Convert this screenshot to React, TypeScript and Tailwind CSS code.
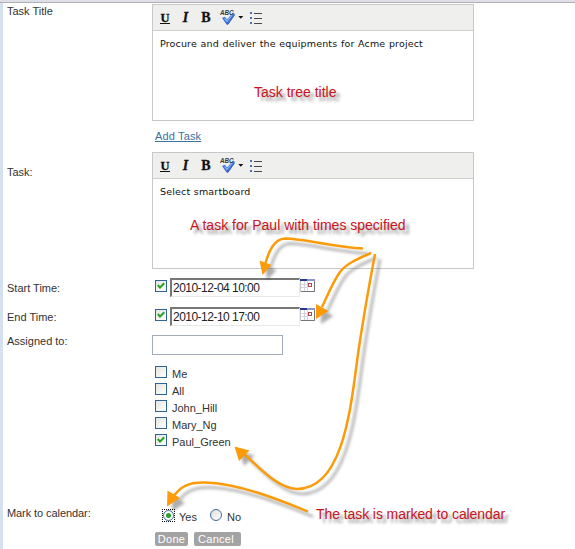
import type { ReactNode } from "react";

function SpellIcon() {
  return (
    <svg className="ml-[9px] h-[17px] w-[24px] shrink-0" viewBox="0 0 24 17">
      <path d="M2 9 L5 7.8 L7 10.5 L13 3.5 L15 5 L8 15.5 L6.5 15.5 Z" fill="#3f74d6" />
      <path d="M4.5 9.3 L7 12.3 L12.5 5.5" fill="none" stroke="#8fb6f5" strokeWidth="1.1" />
      <path d="M7 15.200 L8.200 15 L14.5 6" fill="none" stroke="#2d56a8" strokeWidth="0.9" />
      <text x="0" y="6.4" fontSize="6.5" fontWeight="700" fontStyle="italic" textLength="13.5" lengthAdjust="spacingAndGlyphs" fill="#34383f" fontFamily="Liberation Sans, sans-serif">ABC</text>
      <path d="M18.3 7 h5 l-2.500 2.800 z" fill="#111" />
    </svg>
  );
}

function ListIcon() {
  return (
    <svg className="ml-[6px] h-[12px] w-[12px] shrink-0" viewBox="0 0 12 12">
      <g fill="#4a70b4">
        <rect x="0" y="0" width="2" height="2" />
        <rect x="0" y="5" width="2" height="2" />
        <rect x="0" y="10" width="2" height="2" />
      </g>
      <path d="M4 1.500h8M4 6.500h8M4 11.500h8" stroke="#44474b" strokeWidth="1" />
    </svg>
  );
}

function Editor({ children }: { children: ReactNode }) {
  return (
    <div className="flex h-[117px] w-[322px] flex-col border border-[#c6c8ca] bg-white">
      <div className="flex h-[26px] shrink-0 items-center border-b border-[#cfcfca] bg-[#efefee] pl-[7px] font-['Liberation_Serif',serif] text-[14px] leading-none text-[#111] [-webkit-text-stroke:0.3px_#111]">
        <span className="mt-px w-[10px] border-b border-[#111] text-center text-[12.5px] leading-[10px] font-bold">U</span>
        <span className="ml-[11px] w-[9px] text-center font-bold italic">I</span>
        <span className="ml-[11px] w-[10px] text-center font-bold">B</span>
        <SpellIcon />
        <ListIcon />
      </div>
      <div className="pt-[6px] pl-[7px] font-['DejaVu_Sans',sans-serif] text-[9.5px] leading-[14px] tracking-[0.16px] whitespace-nowrap text-[#111] [word-spacing:0.4px]">
        {children}
      </div>
    </div>
  );
}

function Check({ on = false }: { on?: boolean }) {
  return (
    <span className="flex h-[12px] w-[12px] shrink-0 items-center justify-center border border-[#2f6493] bg-linear-to-br from-[#e4e4e0] to-white">
      {on && (
        <svg className="h-[8px] w-[8px]" viewBox="0 0 8 8">
          <path d="M0.8 3 L3 5.6 L7.2 1.2" fill="none" stroke="#21a121" strokeWidth="2" />
        </svg>
      )}
    </span>
  );
}

function CalendarIcon() {
  return (
    <svg className="h-[13px] w-[15px] shrink-0" viewBox="0 0 15 13">
      <rect x="0.5" y="0.5" width="14" height="12" fill="#fff" stroke="#c5c5ca" />
      <path d="M4.5 2v10M7.5 2v10M1 5.5h7M1 8.5h7" stroke="#d2d3dc" />
      <rect x="0" y="0" width="7" height="2" fill="#27368f" />
      <rect x="7" y="0" width="8" height="2" fill="#8b96c6" />
      <path d="M14.5 2v10.5H1" fill="none" stroke="#77757a" />
      <rect x="8.5" y="4.5" width="3" height="3" fill="#fff" stroke="#b8444c" strokeWidth="1" />
    </svg>
  );
}

function TimeRow({ label, value }: { label: string; value: string }) {
  return (
    <div className="flex h-[19px]">
      <div className="w-[148px] shrink-0 pt-[4px]">{label}</div>
      <div className="mt-[2px]">
        <Check on />
      </div>
      <div className="ml-[3px] flex h-[19px] w-[130px] items-center border-t-2 border-l-2 border-r border-b border-t-[#777] border-r-[#eeeeec] border-b-[#e8e8e6] border-l-[#777] pl-px text-[12px] tracking-[-0.52px] whitespace-nowrap text-[#222]">
        {value}
      </div>
      <div className="mt-px">
        <CalendarIcon />
      </div>
    </div>
  );
}

const people = ["Me", "All", "John_Hill", "Mary_Ng", "Paul_Green"];

const note =
  "absolute text-[14px] leading-[18px] whitespace-nowrap text-[#c9141e] [text-shadow:4px_4px_3px_rgba(0,0,0,0.42)]";

function Arrows() {
  return (
    <svg className="absolute top-0 left-0 h-[549px] w-[575px] [filter:drop-shadow(5px_5px_1.5px_rgba(0,0,0,0.32))]" viewBox="0 0 575 549">
      <g fill="none" stroke="#fb9b0a" strokeWidth="2.5">
        <path d="M363 248.500 C334 247 306 239 285 238.500 C274 239 269 251 265.500 263" />
        <path d="M371 253 C357 259 346 264 340 272 C333 282 328 294 322 307" />
        <path d="M375 254 C368 291 363 320 358 354 C351 405 344 489 297 489 C277 488 259 467 243 453" />
        <path d="M308 511.500 C282 501 240 483.500 205 482.500 C188 482 180 487 173 497" />
      </g>
      <g fill="#fb9b0a">
        <path d="M262.500 275 L259.500 260.500 L271.500 265 Z" />
        <path d="M316 319 L316 304 L328.500 311 Z" />
        <path d="M234.500 446.500 L249.500 450.500 L239 461 Z" />
        <path d="M167 506.500 L167.500 490.500 L180 498 Z" />
      </g>
    </svg>
  );
}

export default function App() {
  return (
    <div className="relative h-[549px] w-[575px] overflow-hidden bg-white font-['Liberation_Sans',Arial,sans-serif] text-[11px] leading-[13px] text-[#333]">
      <div className="h-[3px] border-b border-[#b0b0b0] bg-[#dfdfe9]" />
      <div className="flex h-[546px] flex-col border-l-[3px] border-[#d5e1ef] pl-[4px]">
        <div className="mt-px flex h-[117px]">
          <div className="w-[145px] shrink-0 pt-px">Task Title</div>
          <Editor>Procure and deliver the equipments for Acme project</Editor>
        </div>
        <div className="flex h-[31px] items-center pl-[148px]">
          <a className="tracking-[0.15px] text-[#3a6f9f] underline">Add Task</a>
        </div>
        <div className="flex h-[117px]">
          <div className="w-[145px] shrink-0 pt-[14px]">Task:</div>
          <Editor>Select smartboard</Editor>
        </div>
        <div className="mt-[9px] flex flex-col gap-[10px]">
          <TimeRow label="Start Time:" value="2010-12-04 10:00" />
          <TimeRow label="End Time:" value="2010-12-10 17:00" />
        </div>
        <div className="mt-[9px] flex h-[20px]">
          <div className="w-[145px] shrink-0">Assigned to:</div>
          <div className="h-[20px] w-[131px] border border-[#a3adb9]" />
        </div>
        <div className="mt-[10px] flex flex-col pl-[148px]">
          {people.map((name) => (
            <div key={name} className="flex h-[17px] gap-[5px]">
              <div className="pt-px">
                <Check on={name === "Paul_Green"} />
              </div>
              <span className="pt-[3px]">{name}</span>
            </div>
          ))}
        </div>
        <div className="mt-[57px] flex h-[18px]">
          <div className="w-[155px] shrink-0 tracking-[-0.08px]">Mark to calendar:</div>
          <span className="mt-[2px] flex h-[13px] w-[13px] items-center justify-center border border-dotted border-[#111]">
            <span className="flex h-[11px] w-[11px] shrink-0 items-center justify-center rounded-full border border-[#3e6d96] bg-white">
              <span className="h-[5px] w-[5px] rounded-full bg-[#27a527]" />
            </span>
          </span>
          <span className="ml-[4px] pt-[4px]">Yes</span>
          <span className="mt-[2px] ml-[13px] h-[12px] w-[12px] rounded-full border border-[#3e6d96] bg-linear-to-br from-[#deded9] to-white" />
          <span className="ml-[5px] pt-[4px]">No</span>
        </div>
        <div className="mt-[7px] flex gap-[6px] pl-[148px] text-[11px] leading-[15px] text-white">
          <div className="h-[14px] w-[33px] rounded-[2px] bg-[#a3a3a3] text-center tracking-[0.3px]">Done</div>
          <div className="h-[14px] w-[47px] rounded-[2px] bg-[#a3a3a3] pr-[3px] text-center tracking-[0.3px]">Cancel</div>
        </div>
      </div>
      <Arrows />
      <div className={`${note} top-[83px] left-[254px]`}>Task tree title</div>
      <div className={`${note} top-[216px] left-[190px]`}>A task for Paul with times specified</div>
      <div className={`${note} top-[505px] left-[316px] tracking-[-0.08px]`}>The task is marked to calendar</div>
    </div>
  );
}
